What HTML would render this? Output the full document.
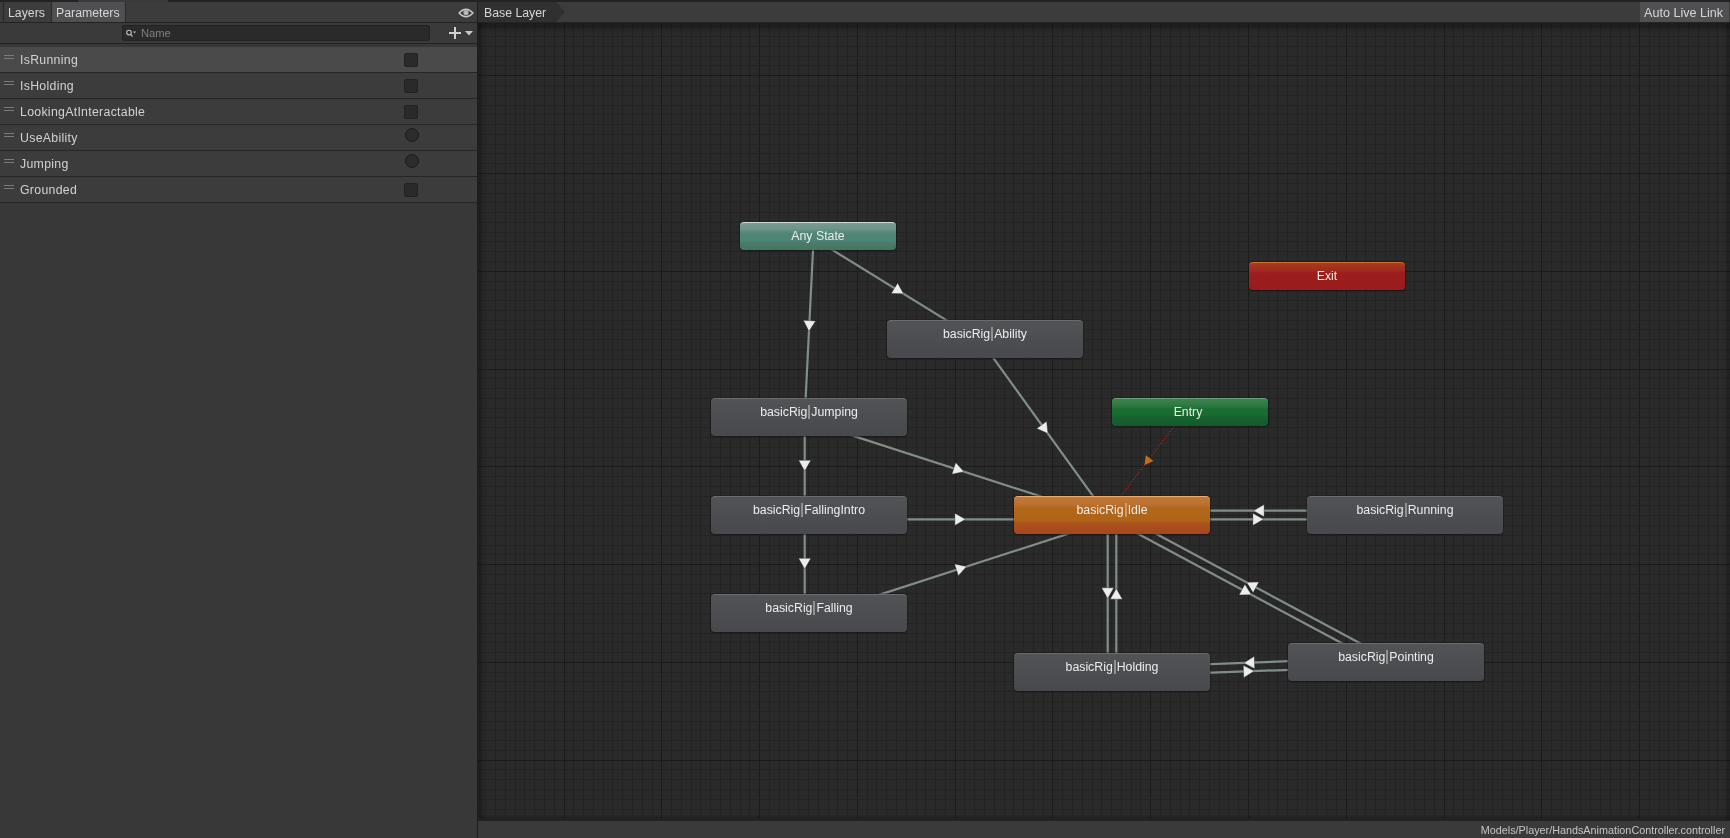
<!DOCTYPE html>
<html><head><meta charset="utf-8"><style>
html,body{margin:0;padding:0;width:1730px;height:838px;overflow:hidden;background:#2a2a2a;font-family:"Liberation Sans", sans-serif;-webkit-font-smoothing:antialiased;}
#root{position:absolute;left:0;top:0;width:1730px;height:838px;will-change:transform}
.abs{position:absolute}
.node{position:absolute;box-sizing:border-box;border-radius:4px;box-shadow:0 0 0 1px rgba(20,20,20,0.35), 0 1px 2px rgba(0,0,0,0.3);}
.lbl{position:absolute;left:0;right:0;text-align:center;color:#ececec;font-size:12.3px;line-height:18px;white-space:nowrap}
.bar{display:inline-block;width:2px;height:14px;background:#88968f;vertical-align:-3px;margin:0 1px 0 1px}
.row{position:absolute;left:0;width:477px;height:25px}
.handle{position:absolute;left:4px;width:10px;height:1px;background:#7a7a7a}
.ptxt{position:absolute;left:20px;top:4px;color:#d2d2d2;font-size:12.3px;line-height:18px;white-space:nowrap;letter-spacing:0.3px}
</style></head><body><div id="root">
<svg width="1730" height="838" style="position:absolute;left:0;top:0"><rect x="485" y="23" width="1" height="797" fill="#232323"/><rect x="495" y="23" width="1" height="797" fill="#232323"/><rect x="505" y="23" width="1" height="797" fill="#232323"/><rect x="515" y="23" width="1" height="797" fill="#232323"/><rect x="524" y="23" width="1" height="797" fill="#232323"/><rect x="534" y="23" width="1" height="797" fill="#232323"/><rect x="544" y="23" width="1" height="797" fill="#232323"/><rect x="554" y="23" width="1" height="797" fill="#232323"/><rect x="564" y="23" width="1" height="797" fill="#1b1b1b"/><rect x="573" y="23" width="1" height="797" fill="#232323"/><rect x="583" y="23" width="1" height="797" fill="#232323"/><rect x="593" y="23" width="1" height="797" fill="#232323"/><rect x="603" y="23" width="1" height="797" fill="#232323"/><rect x="612" y="23" width="1" height="797" fill="#232323"/><rect x="622" y="23" width="1" height="797" fill="#232323"/><rect x="632" y="23" width="1" height="797" fill="#232323"/><rect x="642" y="23" width="1" height="797" fill="#232323"/><rect x="652" y="23" width="1" height="797" fill="#232323"/><rect x="661" y="23" width="1" height="797" fill="#1b1b1b"/><rect x="671" y="23" width="1" height="797" fill="#232323"/><rect x="681" y="23" width="1" height="797" fill="#232323"/><rect x="691" y="23" width="1" height="797" fill="#232323"/><rect x="700" y="23" width="1" height="797" fill="#232323"/><rect x="710" y="23" width="1" height="797" fill="#232323"/><rect x="720" y="23" width="1" height="797" fill="#232323"/><rect x="730" y="23" width="1" height="797" fill="#232323"/><rect x="740" y="23" width="1" height="797" fill="#232323"/><rect x="749" y="23" width="1" height="797" fill="#232323"/><rect x="759" y="23" width="1" height="797" fill="#1b1b1b"/><rect x="769" y="23" width="1" height="797" fill="#232323"/><rect x="779" y="23" width="1" height="797" fill="#232323"/><rect x="788" y="23" width="1" height="797" fill="#232323"/><rect x="798" y="23" width="1" height="797" fill="#232323"/><rect x="808" y="23" width="1" height="797" fill="#232323"/><rect x="818" y="23" width="1" height="797" fill="#232323"/><rect x="828" y="23" width="1" height="797" fill="#232323"/><rect x="837" y="23" width="1" height="797" fill="#232323"/><rect x="847" y="23" width="1" height="797" fill="#232323"/><rect x="857" y="23" width="1" height="797" fill="#1b1b1b"/><rect x="867" y="23" width="1" height="797" fill="#232323"/><rect x="876" y="23" width="1" height="797" fill="#232323"/><rect x="886" y="23" width="1" height="797" fill="#232323"/><rect x="896" y="23" width="1" height="797" fill="#232323"/><rect x="906" y="23" width="1" height="797" fill="#232323"/><rect x="916" y="23" width="1" height="797" fill="#232323"/><rect x="925" y="23" width="1" height="797" fill="#232323"/><rect x="935" y="23" width="1" height="797" fill="#232323"/><rect x="945" y="23" width="1" height="797" fill="#232323"/><rect x="955" y="23" width="1" height="797" fill="#1b1b1b"/><rect x="964" y="23" width="1" height="797" fill="#232323"/><rect x="974" y="23" width="1" height="797" fill="#232323"/><rect x="984" y="23" width="1" height="797" fill="#232323"/><rect x="994" y="23" width="1" height="797" fill="#232323"/><rect x="1004" y="23" width="1" height="797" fill="#232323"/><rect x="1013" y="23" width="1" height="797" fill="#232323"/><rect x="1023" y="23" width="1" height="797" fill="#232323"/><rect x="1033" y="23" width="1" height="797" fill="#232323"/><rect x="1043" y="23" width="1" height="797" fill="#232323"/><rect x="1052" y="23" width="1" height="797" fill="#1b1b1b"/><rect x="1062" y="23" width="1" height="797" fill="#232323"/><rect x="1072" y="23" width="1" height="797" fill="#232323"/><rect x="1082" y="23" width="1" height="797" fill="#232323"/><rect x="1092" y="23" width="1" height="797" fill="#232323"/><rect x="1101" y="23" width="1" height="797" fill="#232323"/><rect x="1111" y="23" width="1" height="797" fill="#232323"/><rect x="1121" y="23" width="1" height="797" fill="#232323"/><rect x="1131" y="23" width="1" height="797" fill="#232323"/><rect x="1140" y="23" width="1" height="797" fill="#232323"/><rect x="1150" y="23" width="1" height="797" fill="#1b1b1b"/><rect x="1160" y="23" width="1" height="797" fill="#232323"/><rect x="1170" y="23" width="1" height="797" fill="#232323"/><rect x="1180" y="23" width="1" height="797" fill="#232323"/><rect x="1189" y="23" width="1" height="797" fill="#232323"/><rect x="1199" y="23" width="1" height="797" fill="#232323"/><rect x="1209" y="23" width="1" height="797" fill="#232323"/><rect x="1219" y="23" width="1" height="797" fill="#232323"/><rect x="1228" y="23" width="1" height="797" fill="#232323"/><rect x="1238" y="23" width="1" height="797" fill="#232323"/><rect x="1248" y="23" width="1" height="797" fill="#1b1b1b"/><rect x="1258" y="23" width="1" height="797" fill="#232323"/><rect x="1268" y="23" width="1" height="797" fill="#232323"/><rect x="1277" y="23" width="1" height="797" fill="#232323"/><rect x="1287" y="23" width="1" height="797" fill="#232323"/><rect x="1297" y="23" width="1" height="797" fill="#232323"/><rect x="1307" y="23" width="1" height="797" fill="#232323"/><rect x="1316" y="23" width="1" height="797" fill="#232323"/><rect x="1326" y="23" width="1" height="797" fill="#232323"/><rect x="1336" y="23" width="1" height="797" fill="#232323"/><rect x="1346" y="23" width="1" height="797" fill="#1b1b1b"/><rect x="1356" y="23" width="1" height="797" fill="#232323"/><rect x="1365" y="23" width="1" height="797" fill="#232323"/><rect x="1375" y="23" width="1" height="797" fill="#232323"/><rect x="1385" y="23" width="1" height="797" fill="#232323"/><rect x="1395" y="23" width="1" height="797" fill="#232323"/><rect x="1404" y="23" width="1" height="797" fill="#232323"/><rect x="1414" y="23" width="1" height="797" fill="#232323"/><rect x="1424" y="23" width="1" height="797" fill="#232323"/><rect x="1434" y="23" width="1" height="797" fill="#232323"/><rect x="1444" y="23" width="1" height="797" fill="#1b1b1b"/><rect x="1453" y="23" width="1" height="797" fill="#232323"/><rect x="1463" y="23" width="1" height="797" fill="#232323"/><rect x="1473" y="23" width="1" height="797" fill="#232323"/><rect x="1483" y="23" width="1" height="797" fill="#232323"/><rect x="1492" y="23" width="1" height="797" fill="#232323"/><rect x="1502" y="23" width="1" height="797" fill="#232323"/><rect x="1512" y="23" width="1" height="797" fill="#232323"/><rect x="1522" y="23" width="1" height="797" fill="#232323"/><rect x="1532" y="23" width="1" height="797" fill="#232323"/><rect x="1541" y="23" width="1" height="797" fill="#1b1b1b"/><rect x="1551" y="23" width="1" height="797" fill="#232323"/><rect x="1561" y="23" width="1" height="797" fill="#232323"/><rect x="1571" y="23" width="1" height="797" fill="#232323"/><rect x="1580" y="23" width="1" height="797" fill="#232323"/><rect x="1590" y="23" width="1" height="797" fill="#232323"/><rect x="1600" y="23" width="1" height="797" fill="#232323"/><rect x="1610" y="23" width="1" height="797" fill="#232323"/><rect x="1620" y="23" width="1" height="797" fill="#232323"/><rect x="1629" y="23" width="1" height="797" fill="#232323"/><rect x="1639" y="23" width="1" height="797" fill="#1b1b1b"/><rect x="1649" y="23" width="1" height="797" fill="#232323"/><rect x="1659" y="23" width="1" height="797" fill="#232323"/><rect x="1668" y="23" width="1" height="797" fill="#232323"/><rect x="1678" y="23" width="1" height="797" fill="#232323"/><rect x="1688" y="23" width="1" height="797" fill="#232323"/><rect x="1698" y="23" width="1" height="797" fill="#232323"/><rect x="1708" y="23" width="1" height="797" fill="#232323"/><rect x="1717" y="23" width="1" height="797" fill="#232323"/><rect x="1727" y="23" width="1" height="797" fill="#232323"/><rect x="478" y="26" width="1252" height="1" fill="#232323"/><rect x="478" y="36" width="1252" height="1" fill="#232323"/><rect x="478" y="46" width="1252" height="1" fill="#232323"/><rect x="478" y="56" width="1252" height="1" fill="#232323"/><rect x="478" y="65" width="1252" height="1" fill="#232323"/><rect x="478" y="75" width="1252" height="1" fill="#1b1b1b"/><rect x="478" y="85" width="1252" height="1" fill="#232323"/><rect x="478" y="95" width="1252" height="1" fill="#232323"/><rect x="478" y="105" width="1252" height="1" fill="#232323"/><rect x="478" y="114" width="1252" height="1" fill="#232323"/><rect x="478" y="124" width="1252" height="1" fill="#232323"/><rect x="478" y="134" width="1252" height="1" fill="#232323"/><rect x="478" y="144" width="1252" height="1" fill="#232323"/><rect x="478" y="153" width="1252" height="1" fill="#232323"/><rect x="478" y="163" width="1252" height="1" fill="#232323"/><rect x="478" y="173" width="1252" height="1" fill="#1b1b1b"/><rect x="478" y="183" width="1252" height="1" fill="#232323"/><rect x="478" y="193" width="1252" height="1" fill="#232323"/><rect x="478" y="202" width="1252" height="1" fill="#232323"/><rect x="478" y="212" width="1252" height="1" fill="#232323"/><rect x="478" y="222" width="1252" height="1" fill="#232323"/><rect x="478" y="232" width="1252" height="1" fill="#232323"/><rect x="478" y="241" width="1252" height="1" fill="#232323"/><rect x="478" y="251" width="1252" height="1" fill="#232323"/><rect x="478" y="261" width="1252" height="1" fill="#232323"/><rect x="478" y="271" width="1252" height="1" fill="#1b1b1b"/><rect x="478" y="281" width="1252" height="1" fill="#232323"/><rect x="478" y="290" width="1252" height="1" fill="#232323"/><rect x="478" y="300" width="1252" height="1" fill="#232323"/><rect x="478" y="310" width="1252" height="1" fill="#232323"/><rect x="478" y="320" width="1252" height="1" fill="#232323"/><rect x="478" y="329" width="1252" height="1" fill="#232323"/><rect x="478" y="339" width="1252" height="1" fill="#232323"/><rect x="478" y="349" width="1252" height="1" fill="#232323"/><rect x="478" y="359" width="1252" height="1" fill="#232323"/><rect x="478" y="369" width="1252" height="1" fill="#1b1b1b"/><rect x="478" y="378" width="1252" height="1" fill="#232323"/><rect x="478" y="388" width="1252" height="1" fill="#232323"/><rect x="478" y="398" width="1252" height="1" fill="#232323"/><rect x="478" y="408" width="1252" height="1" fill="#232323"/><rect x="478" y="417" width="1252" height="1" fill="#232323"/><rect x="478" y="427" width="1252" height="1" fill="#232323"/><rect x="478" y="437" width="1252" height="1" fill="#232323"/><rect x="478" y="447" width="1252" height="1" fill="#232323"/><rect x="478" y="457" width="1252" height="1" fill="#232323"/><rect x="478" y="466" width="1252" height="1" fill="#1b1b1b"/><rect x="478" y="476" width="1252" height="1" fill="#232323"/><rect x="478" y="486" width="1252" height="1" fill="#232323"/><rect x="478" y="496" width="1252" height="1" fill="#232323"/><rect x="478" y="505" width="1252" height="1" fill="#232323"/><rect x="478" y="515" width="1252" height="1" fill="#232323"/><rect x="478" y="525" width="1252" height="1" fill="#232323"/><rect x="478" y="535" width="1252" height="1" fill="#232323"/><rect x="478" y="545" width="1252" height="1" fill="#232323"/><rect x="478" y="554" width="1252" height="1" fill="#232323"/><rect x="478" y="564" width="1252" height="1" fill="#1b1b1b"/><rect x="478" y="574" width="1252" height="1" fill="#232323"/><rect x="478" y="584" width="1252" height="1" fill="#232323"/><rect x="478" y="593" width="1252" height="1" fill="#232323"/><rect x="478" y="603" width="1252" height="1" fill="#232323"/><rect x="478" y="613" width="1252" height="1" fill="#232323"/><rect x="478" y="623" width="1252" height="1" fill="#232323"/><rect x="478" y="633" width="1252" height="1" fill="#232323"/><rect x="478" y="642" width="1252" height="1" fill="#232323"/><rect x="478" y="652" width="1252" height="1" fill="#232323"/><rect x="478" y="662" width="1252" height="1" fill="#1b1b1b"/><rect x="478" y="672" width="1252" height="1" fill="#232323"/><rect x="478" y="681" width="1252" height="1" fill="#232323"/><rect x="478" y="691" width="1252" height="1" fill="#232323"/><rect x="478" y="701" width="1252" height="1" fill="#232323"/><rect x="478" y="711" width="1252" height="1" fill="#232323"/><rect x="478" y="721" width="1252" height="1" fill="#232323"/><rect x="478" y="730" width="1252" height="1" fill="#232323"/><rect x="478" y="740" width="1252" height="1" fill="#232323"/><rect x="478" y="750" width="1252" height="1" fill="#232323"/><rect x="478" y="760" width="1252" height="1" fill="#1b1b1b"/><rect x="478" y="769" width="1252" height="1" fill="#232323"/><rect x="478" y="779" width="1252" height="1" fill="#232323"/><rect x="478" y="789" width="1252" height="1" fill="#232323"/><rect x="478" y="799" width="1252" height="1" fill="#232323"/><rect x="478" y="809" width="1252" height="1" fill="#232323"/><rect x="478" y="818" width="1252" height="1" fill="#232323"/><line x1="813.71" y1="235.79" x2="804.71" y2="416.79" stroke="#808e89" stroke-width="2.2"/><line x1="815.74" y1="239.66" x2="982.74" y2="342.66" stroke="#808e89" stroke-width="2.2"/><line x1="981.51" y1="341.52" x2="1108.51" y2="517.52" stroke="#808e89" stroke-width="2.2"/><line x1="804.70" y1="417.00" x2="804.70" y2="515.00" stroke="#808e89" stroke-width="2.2"/><line x1="804.70" y1="515.00" x2="804.70" y2="613.00" stroke="#808e89" stroke-width="2.2"/><line x1="807.68" y1="421.09" x2="1110.68" y2="519.09" stroke="#808e89" stroke-width="2.2"/><line x1="809.00" y1="519.30" x2="1112.00" y2="519.30" stroke="#808e89" stroke-width="2.2"/><line x1="810.32" y1="617.09" x2="1113.32" y2="519.09" stroke="#808e89" stroke-width="2.2"/><line x1="1112.00" y1="519.30" x2="1405.00" y2="519.30" stroke="#808e89" stroke-width="2.2"/><line x1="1405.00" y1="510.70" x2="1112.00" y2="510.70" stroke="#808e89" stroke-width="2.2"/><line x1="1107.70" y1="515.00" x2="1107.70" y2="672.00" stroke="#808e89" stroke-width="2.2"/><line x1="1116.30" y1="672.00" x2="1116.30" y2="515.00" stroke="#808e89" stroke-width="2.2"/><line x1="1109.97" y1="518.79" x2="1383.97" y2="665.79" stroke="#808e89" stroke-width="2.2"/><line x1="1388.03" y1="658.21" x2="1114.03" y2="511.21" stroke="#808e89" stroke-width="2.2"/><line x1="1112.16" y1="676.30" x2="1386.16" y2="666.30" stroke="#808e89" stroke-width="2.2"/><line x1="1385.84" y1="657.70" x2="1111.84" y2="667.70" stroke="#808e89" stroke-width="2.2"/><polygon points="808.96,331.28 803.34,320.34 815.63,320.95" fill="#ececec" stroke="#1a1a1a" stroke-width="0.6" stroke-opacity="0.6"/><polygon points="903.50,293.78 891.21,293.43 897.66,282.96" fill="#ececec" stroke="#1a1a1a" stroke-width="0.6" stroke-opacity="0.6"/><polygon points="1047.94,433.57 1036.72,428.53 1046.69,421.34" fill="#ececec" stroke="#1a1a1a" stroke-width="0.6" stroke-opacity="0.6"/><polygon points="804.70,471.00 798.55,460.35 810.85,460.35" fill="#ececec" stroke="#1a1a1a" stroke-width="0.6" stroke-opacity="0.6"/><polygon points="804.70,569.00 798.55,558.35 810.85,558.35" fill="#ececec" stroke="#1a1a1a" stroke-width="0.6" stroke-opacity="0.6"/><polygon points="963.93,471.63 951.91,474.20 955.69,462.50" fill="#ececec" stroke="#1a1a1a" stroke-width="0.6" stroke-opacity="0.6"/><polygon points="965.50,519.30 954.85,525.45 954.85,513.15" fill="#ececec" stroke="#1a1a1a" stroke-width="0.6" stroke-opacity="0.6"/><polygon points="966.58,566.55 958.34,575.68 954.56,563.98" fill="#ececec" stroke="#1a1a1a" stroke-width="0.6" stroke-opacity="0.6"/><polygon points="1263.50,519.30 1252.85,525.45 1252.85,513.15" fill="#ececec" stroke="#1a1a1a" stroke-width="0.6" stroke-opacity="0.6"/><polygon points="1253.50,510.70 1264.15,504.55 1264.15,516.85" fill="#ececec" stroke="#1a1a1a" stroke-width="0.6" stroke-opacity="0.6"/><polygon points="1107.70,598.50 1101.55,587.85 1113.85,587.85" fill="#ececec" stroke="#1a1a1a" stroke-width="0.6" stroke-opacity="0.6"/><polygon points="1116.30,588.50 1122.45,599.15 1110.15,599.15" fill="#ececec" stroke="#1a1a1a" stroke-width="0.6" stroke-opacity="0.6"/><polygon points="1251.37,594.65 1239.08,595.04 1244.90,584.20" fill="#ececec" stroke="#1a1a1a" stroke-width="0.6" stroke-opacity="0.6"/><polygon points="1246.63,582.35 1258.92,581.96 1253.10,592.80" fill="#ececec" stroke="#1a1a1a" stroke-width="0.6" stroke-opacity="0.6"/><polygon points="1254.15,671.11 1243.73,677.65 1243.29,665.36" fill="#ececec" stroke="#1a1a1a" stroke-width="0.6" stroke-opacity="0.6"/><polygon points="1243.85,662.89 1254.27,656.35 1254.71,668.64" fill="#ececec" stroke="#1a1a1a" stroke-width="0.6" stroke-opacity="0.6"/><line x1="1186.57" y1="409.40" x2="1108.57" y2="512.40" stroke="#a8201c" stroke-width="1.3" stroke-dasharray="1.2 1.8"/><polygon points="1144.55,464.89 1145.76,455.27 1153.49,461.12" fill="#c07018"/></svg>
<!-- canvas shadows -->
<div class="abs" style="left:478px;top:23px;width:1252px;height:10px;background:linear-gradient(rgba(0,0,0,0.32),rgba(0,0,0,0.22) 40%,rgba(0,0,0,0.06) 80%,rgba(0,0,0,0))"></div>
<div class="abs" style="left:478px;top:23px;width:7px;height:797px;background:linear-gradient(90deg,rgba(0,0,0,0.3),rgba(0,0,0,0.2) 45%,rgba(0,0,0,0.05) 85%,rgba(0,0,0,0))"></div>
<div class="node" style="left:740px;top:222px;width:156px;height:28px;background:linear-gradient(#789a90 0%, #6c958a 22%, #588a7c 34%, #4f8577 42%, #4f8577 66%, #4a7c6e 72%, #44755f 100%);border-top:1px solid #d0dcd6"><div class="lbl" style="top:4px;left:0px;right:0px">Any State</div></div><div class="node" style="left:1249px;top:262px;width:156px;height:28px;background:linear-gradient(#a83a22 0%, #a22c1f 26%, #9b1e1c 38%, #9a1c1c 100%);border-top:1px solid #d07028"><div class="lbl" style="top:4px;left:0px;right:0px">Exit</div></div><div class="node" style="left:1112px;top:398px;width:156px;height:28px;background:linear-gradient(#3c8250 0%, #2c7840 25%, #1b6d33 38%, #1a6c32 58%, #176230 66%, #145a2a 100%);border-top:1px solid #6aa07a"><div class="lbl" style="top:4px;left:-2px;right:2px">Entry</div></div><div class="node" style="left:887px;top:320px;width:196px;height:38px;background:linear-gradient(#525357 0%, #4e4f53 35%, #48494d 100%);border-top:1px solid #6a6b6e"><div class="lbl" style="top:4px;left:0px;right:0px">basicRig<span class="bar" style="background:#88968f"></span>Ability</div></div><div class="node" style="left:711px;top:398px;width:196px;height:38px;background:linear-gradient(#525357 0%, #4e4f53 35%, #48494d 100%);border-top:1px solid #6a6b6e"><div class="lbl" style="top:4px;left:0px;right:0px">basicRig<span class="bar" style="background:#88968f"></span>Jumping</div></div><div class="node" style="left:711px;top:496px;width:196px;height:38px;background:linear-gradient(#525357 0%, #4e4f53 35%, #48494d 100%);border-top:1px solid #6a6b6e"><div class="lbl" style="top:4px;left:0px;right:0px">basicRig<span class="bar" style="background:#88968f"></span>FallingIntro</div></div><div class="node" style="left:711px;top:594px;width:196px;height:38px;background:linear-gradient(#525357 0%, #4e4f53 35%, #48494d 100%);border-top:1px solid #6a6b6e"><div class="lbl" style="top:4px;left:0px;right:0px">basicRig<span class="bar" style="background:#88968f"></span>Falling</div></div><div class="node" style="left:1014px;top:496px;width:196px;height:38px;background:linear-gradient(#c07a3a 0%, #b97030 22%, #b26619 30%, #b06418 64%, #ab521c 70%, #a6461e 100%);border-top:1px solid #f0a868"><div class="lbl" style="top:4px;left:0px;right:0px">basicRig<span class="bar" style="background:#d89a5c"></span>Idle</div></div><div class="node" style="left:1307px;top:496px;width:196px;height:38px;background:linear-gradient(#525357 0%, #4e4f53 35%, #48494d 100%);border-top:1px solid #6a6b6e"><div class="lbl" style="top:4px;left:0px;right:0px">basicRig<span class="bar" style="background:#88968f"></span>Running</div></div><div class="node" style="left:1014px;top:653px;width:196px;height:38px;background:linear-gradient(#525357 0%, #4e4f53 35%, #48494d 100%);border-top:1px solid #6a6b6e"><div class="lbl" style="top:4px;left:0px;right:0px">basicRig<span class="bar" style="background:#88968f"></span>Holding</div></div><div class="node" style="left:1288px;top:643px;width:196px;height:38px;background:linear-gradient(#525357 0%, #4e4f53 35%, #48494d 100%);border-top:1px solid #6a6b6e"><div class="lbl" style="top:4px;left:0px;right:0px">basicRig<span class="bar" style="background:#88968f"></span>Pointing</div></div>
<!-- left panel -->
<div class="abs" style="left:0;top:0;width:477px;height:838px;background:#383838"></div>
<div class="abs" style="left:477px;top:0;width:1px;height:838px;background:#1e1e1e"></div>
<div class="abs" style="left:0;top:0;width:1730px;height:2px;background:#232323"></div>
<div class="abs" style="left:78px;top:0;width:90px;height:2px;background:#3a3a3a"></div>
<div class="abs" style="left:0;top:2px;width:477px;height:20px;background:#3c3c3c"></div>
<div class="abs" style="left:3px;top:2px;width:1px;height:20px;background:#262626"></div>
<div class="abs" style="left:4px;top:2px;width:47px;height:20px;background:#3d3d3d"></div>
<div class="abs" style="left:51px;top:2px;width:1px;height:20px;background:#2a2a2a"></div>
<div class="abs" style="left:52px;top:2px;width:73px;height:20px;background:#505052"></div>
<div class="abs" style="left:125px;top:2px;width:1px;height:20px;background:#2a2a2a"></div>
<div class="abs" style="left:8px;top:4px;color:#d6d6d6;font-size:12.3px;line-height:18px">Layers</div>
<div class="abs" style="left:56px;top:4px;color:#d6d6d6;font-size:12.3px;line-height:18px">Parameters</div>
<svg class="abs" style="left:458px;top:8px" width="16" height="10" viewBox="0 0 16 10"><path d="M1 5 Q8 -2.5 15 5 Q8 12.5 1 5 Z" fill="none" stroke="#c4c9c7" stroke-width="1.3"/><circle cx="8" cy="4.6" r="2.6" fill="#b4b8b6"/></svg>
<div class="abs" style="left:0;top:22px;width:477px;height:1px;background:#232323"></div>
<div class="abs" style="left:0;top:23px;width:477px;height:20px;background:#3a3a3a"></div>
<div class="abs" style="left:122px;top:25px;width:308px;height:16px;background:#2a2a2a;border-radius:3px;box-shadow:inset 0 0 0 1px #232323"></div>
<svg class="abs" style="left:125px;top:29px" width="12" height="9" viewBox="0 0 12 9"><circle cx="4" cy="3.6" r="2.3" fill="none" stroke="#b8bcba" stroke-width="1.1"/><line x1="5.6" y1="5.3" x2="7.6" y2="7.5" stroke="#b8bcba" stroke-width="1.2"/><path d="M8 2.5 L11 2.5 L9.5 4.5 Z" fill="#b8bcba"/></svg>
<div class="abs" style="left:141px;top:25px;color:#808080;font-size:11.2px;line-height:16px">Name</div>
<div class="abs" style="left:449px;top:32px;width:12px;height:2px;background:#d0d0d0"></div>
<div class="abs" style="left:454px;top:27px;width:2px;height:12px;background:#d0d0d0"></div>
<svg class="abs" style="left:465px;top:31px" width="8" height="5" viewBox="0 0 8 5"><path d="M0 0 L8 0 L4 4.5 Z" fill="#c8c8c8"/></svg>
<div class="abs" style="left:0;top:43px;width:477px;height:1px;background:#232323"></div>
<div class="row" style="top:47px;background:#4a4a4b"><div class="handle" style="top:8px"></div><div class="handle" style="top:11px"></div><div class="ptxt">IsRunning</div><div style="position:absolute;left:404px;top:6px;width:12px;height:12px;background:#2a2a2a;border:1px solid #222;border-radius:2px"></div></div><div style="position:absolute;left:0;top:72px;width:477px;height:1px;background:#262626"></div><div class="row" style="top:73px;background:#3c3c3c"><div class="handle" style="top:8px"></div><div class="handle" style="top:11px"></div><div class="ptxt">IsHolding</div><div style="position:absolute;left:404px;top:6px;width:12px;height:12px;background:#2a2a2a;border:1px solid #222;border-radius:2px"></div></div><div style="position:absolute;left:0;top:98px;width:477px;height:1px;background:#262626"></div><div class="row" style="top:99px;background:#3c3c3c"><div class="handle" style="top:8px"></div><div class="handle" style="top:11px"></div><div class="ptxt">LookingAtInteractable</div><div style="position:absolute;left:404px;top:6px;width:12px;height:12px;background:#2a2a2a;border:1px solid #222;border-radius:2px"></div></div><div style="position:absolute;left:0;top:124px;width:477px;height:1px;background:#262626"></div><div class="row" style="top:125px;background:#3c3c3c"><div class="handle" style="top:8px"></div><div class="handle" style="top:11px"></div><div class="ptxt">UseAbility</div><div style="position:absolute;left:405px;top:3px;width:12px;height:12px;background:#2c2c2c;border:1px solid #1b1b1b;border-radius:50%"></div></div><div style="position:absolute;left:0;top:150px;width:477px;height:1px;background:#262626"></div><div class="row" style="top:151px;background:#3c3c3c"><div class="handle" style="top:8px"></div><div class="handle" style="top:11px"></div><div class="ptxt">Jumping</div><div style="position:absolute;left:405px;top:3px;width:12px;height:12px;background:#2c2c2c;border:1px solid #1b1b1b;border-radius:50%"></div></div><div style="position:absolute;left:0;top:176px;width:477px;height:1px;background:#262626"></div><div class="row" style="top:177px;background:#3c3c3c"><div class="handle" style="top:8px"></div><div class="handle" style="top:11px"></div><div class="ptxt">Grounded</div><div style="position:absolute;left:404px;top:6px;width:12px;height:12px;background:#2a2a2a;border:1px solid #222;border-radius:2px"></div></div><div style="position:absolute;left:0;top:202px;width:477px;height:1px;background:#262626"></div>
<!-- canvas toolbar -->
<div class="abs" style="left:478px;top:2px;width:1252px;height:20px;background:#3c3c3c"></div>
<div class="abs" style="left:478px;top:22px;width:1252px;height:1px;background:#232323"></div>
<svg class="abs" style="left:478px;top:2px" width="90" height="20"><path d="M0 0 L78 0 L87 10 L78 20 L0 20 Z" fill="#303030"/></svg>
<div class="abs" style="left:484px;top:4px;color:#d6d6d6;font-size:12.3px;line-height:18px">Base Layer</div>
<div class="abs" style="left:1640px;top:2px;width:89px;height:20px;background:#505052"></div>
<div class="abs" style="left:1644px;top:4px;color:#d6d6d6;font-size:12.6px;line-height:18px;white-space:nowrap">Auto Live Link</div>
<!-- status bar -->
<div class="abs" style="left:478px;top:818px;width:1252px;height:3px;background:#222222"></div>
<div class="abs" style="left:478px;top:821px;width:1252px;height:17px;background:#3a3a3a"></div>
<div class="abs" style="left:1724px;top:23px;width:6px;height:797px;background:linear-gradient(90deg,rgba(0,0,0,0),rgba(0,0,0,0.22))"></div>
<div class="abs" style="left:478px;top:814px;width:1252px;height:4px;background:linear-gradient(rgba(0,0,0,0),rgba(0,0,0,0.22))"></div>
<div class="abs" style="right:5px;top:823px;color:#c4c4c4;font-size:10.8px;line-height:14px;white-space:nowrap">Models/Player/HandsAnimationController.controller</div>
</div></body></html>
